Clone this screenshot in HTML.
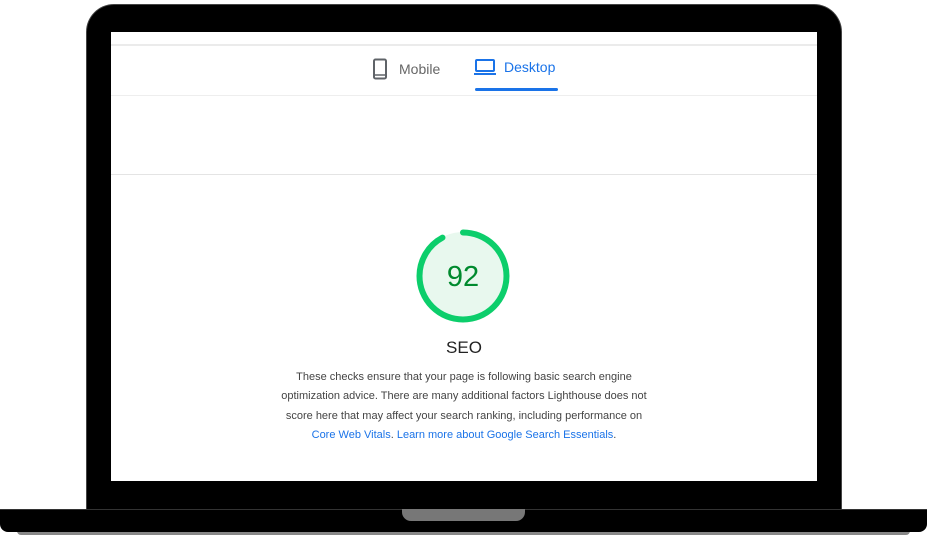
<!DOCTYPE html>
<html><head><style>
*{margin:0;padding:0;box-sizing:border-box}
body{width:927px;height:542px;background:#fff;position:relative;overflow:hidden;font-family:"Liberation Sans",Arial,sans-serif}
.lid{position:absolute;left:86px;top:4px;width:756px;height:508px;background:#000;border-radius:28px 28px 0 0;border:1px solid #444;border-bottom:none}
.screen{position:absolute;left:111px;top:32px;width:706px;height:449px;background:#fff;overflow:hidden}
.base{position:absolute;left:0;top:509px;width:927px;height:23px;background:#000;border-radius:0 0 8px 8px;border-top:1px solid #333}
.shadow{position:absolute;left:17px;top:530px;width:893px;height:5px;background:#888;border-radius:0 0 4px 4px}
.notch{position:absolute;left:402px;top:509px;width:123px;height:12px;background:#777;border-radius:0 0 9px 9px}
.line{position:absolute;left:0;width:706px;height:1px;background:#e4e4e4}
.tab{position:absolute;top:26px;font-size:14px;display:flex;align-items:center}
p{position:absolute;left:0;width:706px;text-align:center;font-size:11px;line-height:19.3px;color:#444}
a{color:#1a73e8;text-decoration:none}
</style></head><body>
<div class="shadow"></div>
<div class="lid"></div>
<div class="base"></div>
<div class="notch"></div>
<div class="screen">
 <div class="line" style="top:12px;height:2px;background:#ebebeb"></div>
 <div class="line" style="top:63px;background:#eee"></div>
 <div class="line" style="top:142px"></div>
 <div class="tab" style="left:260px;color:#666">
  <svg width="18" height="22" viewBox="0 0 18 22" style="margin-right:10px"><rect x="3" y="1.5" width="12" height="19" rx="1.5" fill="none" stroke="#5f6368" stroke-width="2"/><line x1="3" y1="17" x2="15" y2="17" stroke="#5f6368" stroke-width="1.5"/></svg>Mobile</div>
 <div class="tab" style="left:363px;color:#1a73e8">
  <svg width="22" height="18" viewBox="0 0 22 18" style="margin-right:8px"><rect x="2" y="2" width="18" height="11" rx="1" fill="none" stroke="#1a73e8" stroke-width="2"/><line x1="0" y1="16" x2="22" y2="16" stroke="#1a73e8" stroke-width="2"/></svg>Desktop</div>
 <div style="position:absolute;left:364px;top:56px;width:83px;height:3px;background:#1a73e8;border-radius:2px"></div>
 <svg style="position:absolute;left:305px;top:197px" width="94" height="94" viewBox="0 0 94 94">
  <circle cx="47" cy="47" r="44" fill="#e8f8ee"/>
  <circle cx="47" cy="47" r="43.5" fill="none" stroke="#0cce6b" stroke-width="6" stroke-dasharray="251.5 273.3" transform="rotate(-90 47 47)" stroke-linecap="round"/>
  <text x="47" y="57" text-anchor="middle" font-size="29" fill="#008a2e" font-family="Liberation Sans,sans-serif">92</text>
 </svg>
 <div style="position:absolute;left:0;width:706px;top:306px;text-align:center;font-size:17px;color:#222">SEO</div>
 <p style="top:336px">These checks ensure that your page is following basic search engine<br>optimization advice. There are many additional factors Lighthouse does not<br>score here that may affect your search ranking, including performance on<br><a>Core Web Vitals</a>. <a>Learn more about Google Search Essentials</a>.</p>
</div>
</body></html>
